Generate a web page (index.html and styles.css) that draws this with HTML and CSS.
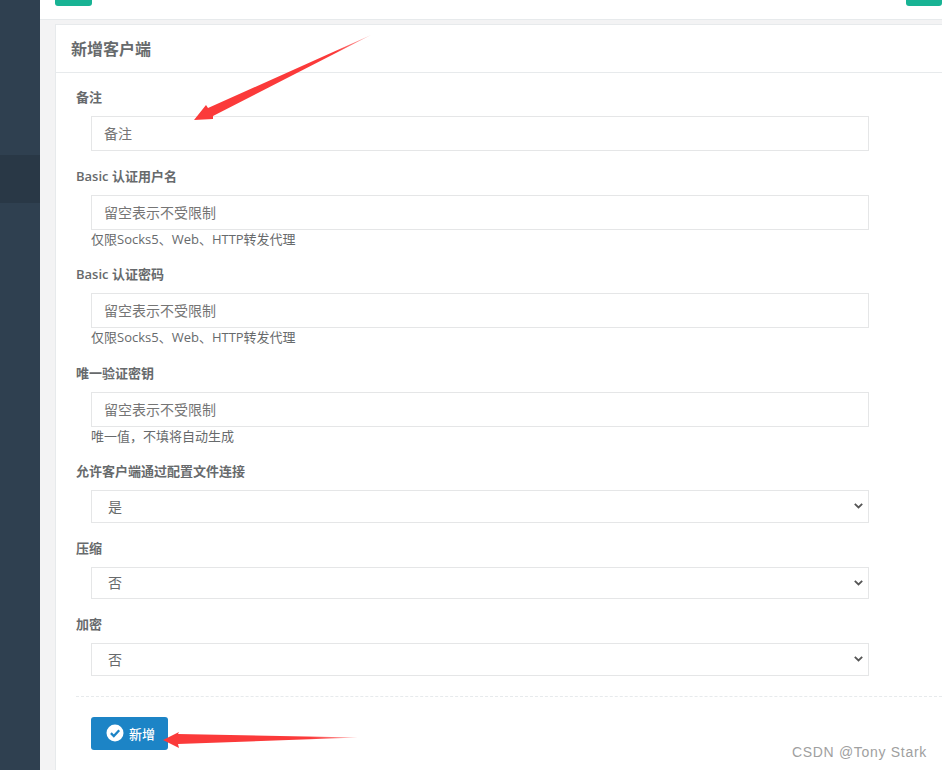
FILE: index.html
```html
<!DOCTYPE html>
<html lang="zh-CN">
<head>
<meta charset="utf-8">
<title>新增客户端</title>
<link rel="stylesheet" href="styles.css">
</head>
<body>
<div class="app">
  <aside class="sidebar"><div class="nav-active"></div></aside>
  <main class="main">
    <div class="topbar">
      <span class="top-btn"></span>
      <span class="top-btn top-btn-right"></span>
    </div>
    <section class="card">
      <h5 class="card-title">新增客户端</h5>
      <form class="form">
        <div class="group">
          <label class="label">备注</label>
          <input class="control" type="text" placeholder="备注">
        </div>
        <div class="group">
          <label class="label">Basic 认证用户名</label>
          <input class="control" type="text" placeholder="留空表示不受限制">
          <span class="help">仅限Socks5、Web、HTTP转发代理</span>
        </div>
        <div class="group">
          <label class="label">Basic 认证密码</label>
          <input class="control" type="text" placeholder="留空表示不受限制">
          <span class="help">仅限Socks5、Web、HTTP转发代理</span>
        </div>
        <div class="group">
          <label class="label">唯一验证密钥</label>
          <input class="control" type="text" placeholder="留空表示不受限制">
          <span class="help">唯一值，不填将自动生成</span>
        </div>
        <div class="group">
          <label class="label">允许客户端通过配置文件连接</label>
          <select class="control select"><option>是</option><option>否</option></select>
        </div>
        <div class="group">
          <label class="label">压缩</label>
          <select class="control select"><option>否</option><option>是</option></select>
        </div>
        <div class="group">
          <label class="label">加密</label>
          <select class="control select"><option>否</option><option>是</option></select>
        </div>
        <div class="divider"></div>
        <button class="submit" type="button">
          <svg class="check" viewBox="0 0 18 18" width="18" height="18" aria-hidden="true">
            <circle cx="9" cy="9" r="8.5" fill="#fff"/>
            <path d="M4.9 9.2 L7.8 12 L13.2 6.3" fill="none" stroke="#1c84c6" stroke-width="2.3"/>
          </svg>
          新增
        </button>
      </form>
    </section>
  </main>
</div>
<svg class="arrows" width="942" height="770" viewBox="0 0 942 770" aria-hidden="true">
  <defs>
    <linearGradient id="a1" gradientUnits="userSpaceOnUse" x1="371" y1="35" x2="195" y2="120">
      <stop offset="0" stop-color="#fb3a3a" stop-opacity=".35"/>
      <stop offset=".2" stop-color="#fb3a3a"/>
      <stop offset="1" stop-color="#fb3a3a"/>
    </linearGradient>
    <linearGradient id="a2" gradientUnits="userSpaceOnUse" x1="358" y1="737" x2="165" y2="741">
      <stop offset="0" stop-color="#fb3a3a" stop-opacity=".35"/>
      <stop offset=".25" stop-color="#fb3a3a"/>
      <stop offset="1" stop-color="#fb3a3a"/>
    </linearGradient>
  </defs>
  <path d="M371 35 L213 116 L213 119 L194 120 L206 105 L208 108 Z" fill="url(#a1)"/>
  <path d="M358 737.5 L178 734 L179 732 L163 740 L179 748 L178 744 Z" fill="url(#a2)"/>
</svg>
<div class="watermark">CSDN @Tony Stark</div>
</body>
</html>
```

FILE: styles.css
```css
* { box-sizing: border-box; }
html, body { margin: 0; height: 770px; overflow: hidden; }
body {
  position: relative;
  font-family: "Open Sans", "Noto Sans CJK SC", "Liberation Sans", sans-serif;
  font-size: 13px;
  color: #676a6c;
  background: #f3f3f4;
}
.app { display: flex; height: 770px; }
.sidebar { flex: 0 0 40px; background: #2f4050; padding-top: 155px; }
.nav-active { height: 48px; background: #293846; }
.main { flex: 1; min-width: 0; background: #f3f3f4; }
.topbar {
  display: flex;
  justify-content: space-between;
  height: 20px;
  padding: 0 0 0 15px;
  background: #fff;
  border-bottom: 1px solid #e7eaec;
}
.top-btn {
  width: 37px;
  height: 6px;
  background: #18b394;
  border-radius: 0 0 3px 3px;
}
.top-btn-right { width: 36px; }
.card {
  margin: 4px 0 0 15px;
  height: 746px;
  background: #fff;
  border: 1px solid #e7eaec;
  border-right: 0;
  border-bottom: 0;
}
.card-title {
  margin: 0;
  height: 48px;
  padding: 0 15px;
  font-size: 16px;
  font-weight: 600;
  line-height: 48px;
  color: #676a6c;
  border-bottom: 1px solid #e7eaec;
}
.form { padding: 14px 0 0 20px; }
.group { margin-bottom: 15px; padding-right: 72px; }
.label {
  display: block;
  height: 20px;
  line-height: 20px;
  margin-bottom: 9px;
  font-size: 13px;
  font-weight: 600;
  color: #676a6c;
}
.control {
  display: block;
  width: 778px;
  height: 35px;
  margin-left: 15px;
  padding: 0 12px;
  font: inherit;
  font-size: 14px;
  color: #676a6c;
  background: #fff;
  border: 1px solid #e5e6e7;
  border-radius: 0;
  outline: 0;
}
.control::placeholder { color: #757575; opacity: 1; }
.select {
  height: 32.5px;
  padding: 0 24px 0 16px;
  appearance: none;
  background-image: url("data:image/svg+xml,%3Csvg xmlns='http://www.w3.org/2000/svg' width='9' height='6'%3E%3Cpath d='M.8 .9 4.5 4.5 8.2 .9' fill='none' stroke='%23555' stroke-width='1.8'/%3E%3C/svg%3E");
  background-repeat: no-repeat;
  background-position: right 5px center;
}
.help {
  display: block;
  height: 19.4px;
  line-height: 18px;
  margin-left: 15px;
  font-size: 13px;
  color: #676a6c;
}
.divider { margin: 20px 0 20px; border-top: 1px dashed #e7eaec; }
.submit {
  display: flex;
  align-items: center;
  gap: 5px;
  width: 77px;
  height: 33px;
  margin-left: 15px;
  padding: 0 0 0 15px;
  font: inherit;
  font-size: 13px;
  font-weight: 500;
  color: #fff;
  background: #1c84c6;
  border: 0;
  border-radius: 3px;
}
.check { flex: none; }
.arrows { position: absolute; left: 0; top: 0; pointer-events: none; }
.watermark {
  position: absolute;
  right: 15px;
  top: 744px;
  font-family: "Liberation Sans", sans-serif;
  font-size: 14px;
  letter-spacing: .7px;
  color: #a0a0a0;
}
```
